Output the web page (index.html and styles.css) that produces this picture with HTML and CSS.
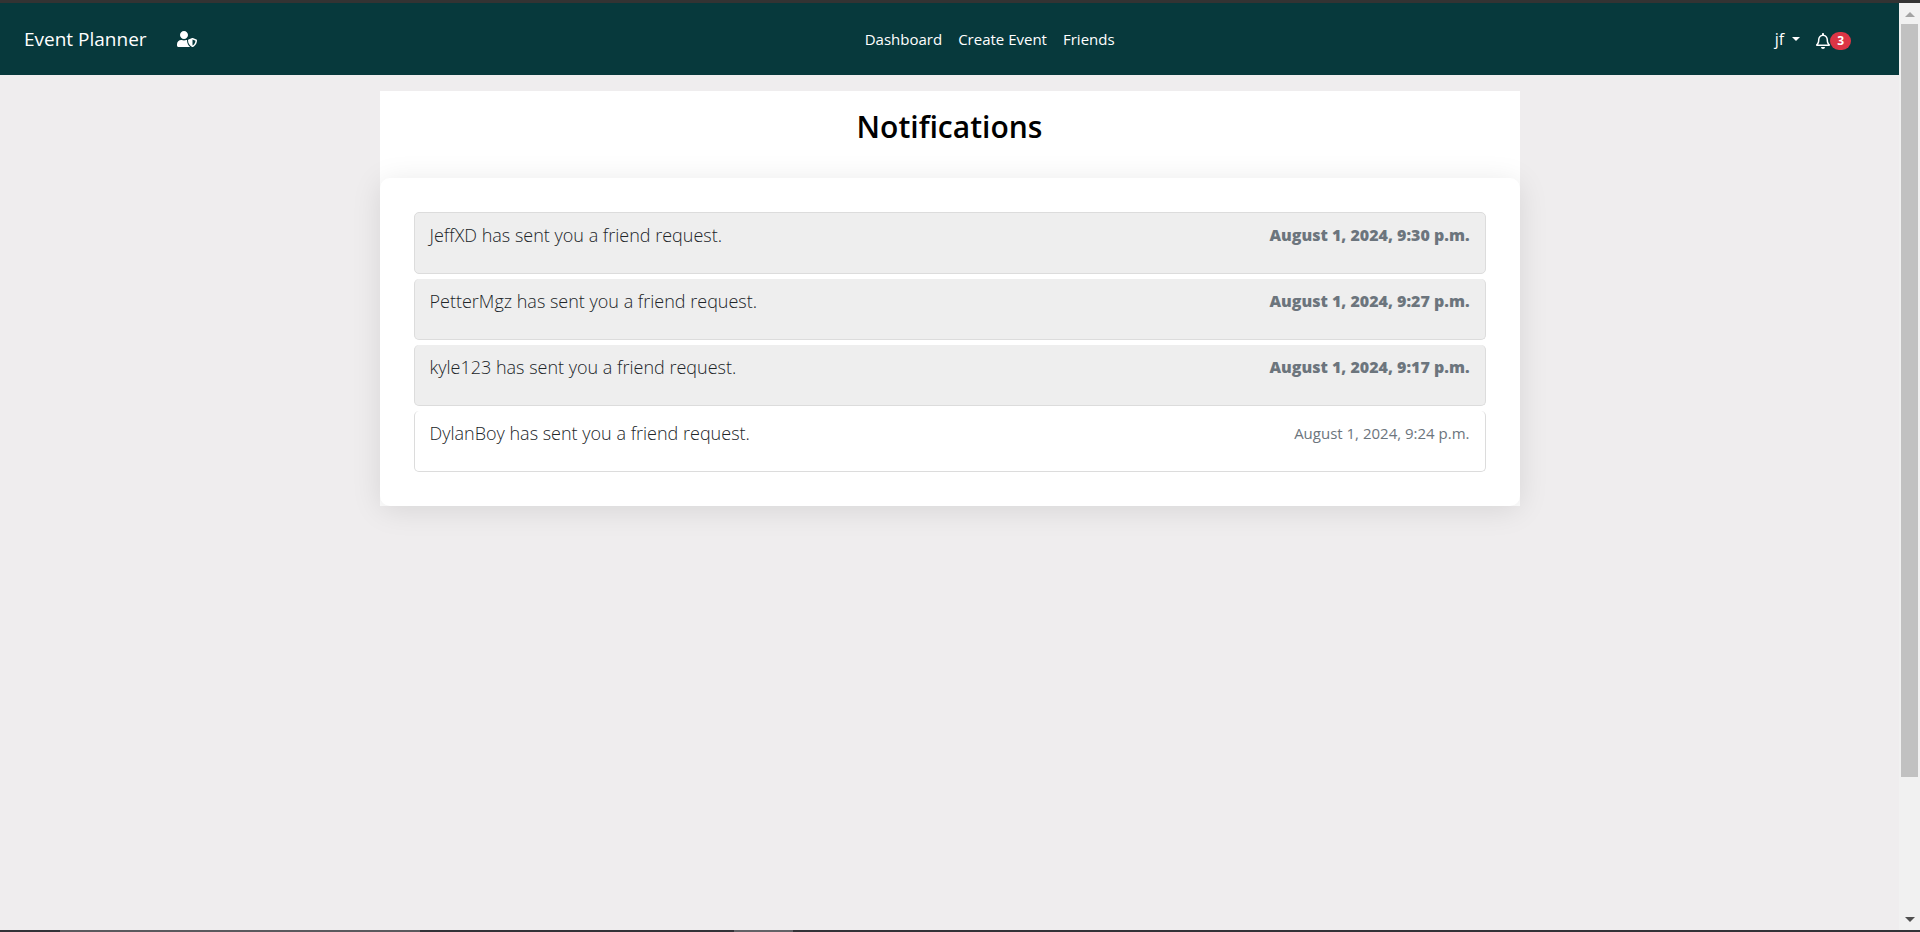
FILE: index.html
```html
<!DOCTYPE html>
<html lang="en">
<head>
  <meta charset="utf-8">
  <title>Event Planner - Notifications</title>
  <link rel="stylesheet" href="styles.css">
</head>
<body>
  <div class="window">
    <div class="page">
      <header class="navbar">
        <div class="nav-start">
          <a class="brand" href="#">Event Planner</a>
          <a class="admin-link" href="#" aria-label="Administration">
            <svg class="icon-shield" viewBox="0 0 640 512" fill="currentColor" aria-hidden="true"><path d="M622.3 271.1l-115.2-45c-4.1-1.6-12.6-3.7-22.2 0l-115.2 45c-10.7 4.2-17.7 14-17.7 24.9 0 111.6 68.7 188.8 132.9 213.9 9.6 3.7 18 1.6 22.2 0C558.4 489.9 640 420.5 640 296c0-10.9-7-20.7-17.7-24.9zM496 462.4V273.3l95.5 37.3c-5.6 87.1-60.9 135.4-95.5 151.8zM224 256c70.7 0 128-57.3 128-128S294.7 0 224 0 96 57.3 96 128s57.3 128 128 128zm96 40c0-2.5.8-4.8 1.1-7.2-2.5-.1-4.9-.8-7.5-.8h-16.7c-22.2 10.2-46.9 16-72.9 16s-50.6-5.8-72.9-16h-16.7C60.2 288 0 348.2 0 422.4V464c0 26.5 21.5 48 48 48h352c6.8 0 13.3-1.5 19.2-4-54-42.9-99.2-116.7-99.2-212z"/></svg>
          </a>
        </div>
        <nav class="nav-links">
          <a href="#">Dashboard</a>
          <a href="#">Create Event</a>
          <a href="#">Friends</a>
        </nav>
        <div class="nav-end">
          <button class="user-menu" type="button">jf<span class="caret"></span></button>
          <a class="bell" href="#" aria-label="Notifications">
            <svg class="icon-bell" viewBox="0 0 448 512" fill="currentColor" aria-hidden="true"><path d="M439.39 362.29c-19.32-20.76-55.47-51.99-55.47-154.29 0-77.7-54.48-139.9-127.94-155.16V32c0-17.67-14.32-32-31.98-32s-31.98 14.33-31.98 32v20.84C118.56 68.1 64.08 130.3 64.08 208c0 102.3-36.15 133.53-55.47 154.29-6 6.45-8.66 14.16-8.61 21.71.11 16.4 12.98 32 32.1 32h383.8c19.12 0 32-15.6 32.1-32 .05-7.55-2.61-15.27-8.61-21.71zM67.53 368c21.22-27.97 44.42-74.33 44.53-159.42 0-.2-.06-.38-.06-.58 0-61.86 50.14-112 112-112s112 50.14 112 112c0 .2-.06.38-.06.58.11 85.1 23.31 131.46 44.53 159.42H67.53zM224 512c35.32 0 63.97-28.65 63.97-64H160.03c0 35.35 28.65 64 63.97 64z"/></svg>
            <span class="badge">3</span>
          </a>
        </div>
      </header>
      <main class="panel">
        <h1 class="title">Notifications</h1>
        <section class="card">
          <ul class="list">
            <li class="item unread"><a href="#">JeffXD has sent you a friend request.</a><time>August 1, 2024, 9:30 p.m.</time></li>
            <li class="item unread"><a href="#">PetterMgz has sent you a friend request.</a><time>August 1, 2024, 9:27 p.m.</time></li>
            <li class="item unread"><a href="#">kyle123 has sent you a friend request.</a><time>August 1, 2024, 9:17 p.m.</time></li>
            <li class="item"><a href="#">DylanBoy has sent you a friend request.</a><time>August 1, 2024, 9:24 p.m.</time></li>
          </ul>
        </section>
      </main>
    </div>
    <div class="scrollbar" aria-hidden="true">
      <span class="arrow arrow-up"></span>
      <span class="track"><span class="thumb"></span></span>
      <span class="arrow arrow-down"></span>
    </div>
  </div>
  <div class="taskbar-edge" aria-hidden="true"></div>
</body>
</html>
```
FILE: styles.css
```css
* { box-sizing: border-box; }

body {
  display: flex;
  flex-direction: column;
  min-height: 100vh;
  margin: 0;
  background: #efedee;
  color: #212529;
  font: 15px/24px "Open Sans", "Noto Sans", sans-serif;
}

a { color: inherit; text-decoration: none; }

.window {
  display: flex;
  flex: 1;
  border-top: 3px solid #333333;
}

.page { flex: 1; }

.navbar {
  display: flex;
  align-items: center;
  justify-content: space-between;
  height: 72px;
  padding: 0 48px 0 24px;
  background: #07393c;
  color: #ffffff;
}

.nav-start { display: flex; align-items: center; gap: 30px; padding-right: 8px; }
.brand { font-size: 19px; }
.admin-link { display: flex; }
.icon-shield { width: 20px; height: 16px; }

.nav-links { display: flex; gap: 16px; }

.nav-end { display: flex; align-items: center; gap: 16px; }

.user-menu {
  display: flex;
  align-items: center;
  gap: 8px;
  padding: 0;
  border: 0;
  background: none;
  color: inherit;
  font: inherit;
  font-size: 16px;
}

.caret {
  border: 4px solid transparent;
  border-top-color: currentColor;
  border-bottom: 0;
}

.bell { display: flex; align-items: center; padding-top: 4px; }
.icon-bell { width: 14px; height: 16px; }

.badge {
  padding: 0 7px;
  border-radius: 9px;
  background: #dc3545;
  font-size: 12px;
  line-height: 18px;
  font-weight: 700;
}

.panel {
  max-width: 1140px;
  margin: 16px auto;
  background: #ffffff;
}

.title {
  margin: 0;
  padding: 16px 0 31px;
  color: #000000;
  font-size: 30px;
  line-height: 40px;
  font-weight: 600;
  text-align: center;
}

.card {
  padding: 34px;
  border-radius: 10px;
  background: #ffffff;
  box-shadow: 0 4px 30px rgba(0, 0, 0, 0.1);
}

.list {
  display: flex;
  flex-direction: column;
  gap: 5px;
  margin: 0;
  padding: 0;
  list-style: none;
}

.item {
  display: flex;
  justify-content: space-between;
  padding: 10px 15px 26px;
  border: 1px solid #dcdcdc;
  border-top-width: 0;
  border-radius: 5px;
}

.item:first-child { border-top-width: 1px; }
.item a { font-size: 18px; font-weight: 300; }
.item time { color: #6c757d; }
.unread { background: #eeeeee; }
.unread time { font-size: 16px; font-weight: 800; }

.scrollbar {
  display: flex;
  flex-direction: column;
  width: 21px;
  padding: 9px 2px 8px;
  background: #f1f1f1;
}

.arrow {
  align-self: center;
  border: 5px solid transparent;
}

.arrow-up { border-top: 0; border-bottom-color: #a3a3a3; }
.arrow-down { border-bottom: 0; border-top-color: #505050; }

.track { flex: 1; padding: 7px 0; }
.thumb { display: block; height: 85%; background: #c1c1c1; }

.taskbar-edge {
  height: 2px;
  background: linear-gradient(to right, #333237 60px, #5a595d 60px 420px, #333237 420px 734px, #636267 734px 793px, #333237 793px);
}
```
